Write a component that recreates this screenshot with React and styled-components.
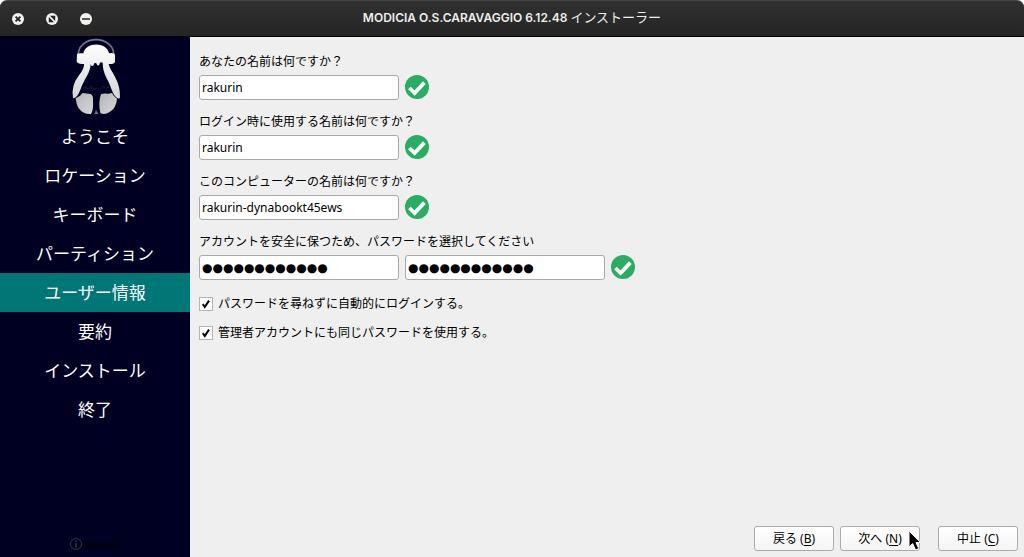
import React from "react";
import styled, { createGlobalStyle } from "styled-components";

const GlobalStyle = createGlobalStyle`
  *, *::before, *::after { box-sizing: border-box; }
  body {
    margin: 0;
    background: #ffffff;
    color: #000000;
    font: 12px/18px "Noto Sans", "Noto Sans CJK JP", sans-serif;
  }
`;

const Window = styled.div`
  display: flex;
  flex-direction: column;
  min-height: 100vh;
`;

const TitleBar = styled.header`
  display: grid;
  grid-template-columns: 1fr auto 1fr;
  align-items: center;
  height: 37px;
  padding: 0 12px;
  background: linear-gradient(#303030, #252525);
  border-top: 1px solid #454545;
  border-bottom: 1px solid #000000;
  border-radius: 7px 7px 0 0;
`;

const WindowControls = styled.div`
  display: flex;
  gap: 22px;
`;

const ControlButton = styled.button`
  display: block;
  width: 12px;
  height: 12px;
  padding: 0;
  border: 0;
  border-radius: 50%;
  background: #f2f1ee;

  svg { display: block; }
`;

const Title = styled.h1`
  margin: 0;
  padding-bottom: 2px;
  color: #eeeeec;
  font: 600 12px/20px Inter, "Noto Sans CJK JP", sans-serif;

  span {
    font-size: 13px;
    font-weight: 400;
  }
`;

const Body = styled.div`
  display: flex;
  flex: 1;
`;

const Sidebar = styled.aside`
  display: flex;
  flex-direction: column;
  flex: 0 0 190px;
  background: #000022;
`;

const Logo = styled.svg`
  display: block;
  align-self: center;
  width: 70px;
  height: 80px;
`;

const Steps = styled.ol`
  flex: 1;
  margin: 0;
  padding: 0;
  list-style: none;
`;

const Step = styled.li`
  color: #ffffff;
  background: ${(p) => (p.$active ? "#007777" : "transparent")};
  font-size: 17px;
  line-height: 39px;
  text-align: center;
`;

const AboutButton = styled.button`
  display: flex;
  align-items: center;
  justify-content: center;
  gap: 4px;
  height: 26px;
  padding: 0;
  border: 0;
  background: none;
  color: #000008;
  font: inherit;
`;

const Main = styled.main`
  display: flex;
  flex-direction: column;
  flex: 1;
  background: #efefef;
`;

const Form = styled.form`
  flex: 1;
  padding: 16px 9px;
`;

const Fields = styled.div`
  display: grid;
  gap: 13px;
  margin-bottom: 9px;
`;

const Field = styled.div`
  display: grid;
  gap: 4px;
`;

const FieldLabel = styled.label`
  display: block;
`;

const FieldRow = styled.div`
  display: flex;
  align-items: flex-start;
  gap: 6px;
`;

const TextInput = styled.input`
  width: 200px;
  height: 25px;
  padding: 0 2px;
  border: 1px solid #a9a9a9;
  border-radius: 3px;
  background: #ffffff;
  color: #000000;
  font: inherit;
  outline: none;
`;

const MaskedInput = styled(TextInput)`
  font-family: "DejaVu Sans", sans-serif;
  font-size: 12px;
`;

const CheckRow = styled.label`
  display: flex;
  align-items: center;
  gap: 5px;
  height: 29px;
`;

const CheckBox = styled.input`
  appearance: none;
  width: 14px;
  height: 14px;
  margin: 0;
  border: 1px solid #b4b4b4;
  background: #ffffff;

  &:checked {
    background-image: url("data:image/svg+xml,%3Csvg xmlns='http://www.w3.org/2000/svg' viewBox='0 0 12 12'%3E%3Cpath d='M2.8 6.2L4.8 9L9 2.6' fill='none' stroke='black' stroke-width='2'/%3E%3C/svg%3E");
  }
`;

const Footer = styled.footer`
  display: flex;
  justify-content: flex-end;
  gap: 6px;
  padding: 6px;
`;

const PushButton = styled.button`
  position: relative;
  width: 80px;
  height: 25px;
  margin-left: ${(p) => (p.$apart ? "12px" : "0")};
  padding: 0;
  border: 1px solid #ababab;
  border-radius: 3px;
  background: linear-gradient(#ffffff, #f5f5f5);
  color: #000000;
  font: inherit;

  u { text-underline-offset: 2px; }
`;

const Pointer = styled.svg`
  position: absolute;
  top: 3px;
  right: -5px;
  width: 16px;
  height: 22px;
`;

const steps = [
  "ようこそ",
  "ロケーション",
  "キーボード",
  "パーティション",
  "ユーザー情報",
  "要約",
  "インストール",
  "終了",
];

const fields = [
  { id: "full-name", label: "あなたの名前は何ですか？", value: "rakurin" },
  { id: "login-name", label: "ログイン時に使用する名前は何ですか？", value: "rakurin" },
  { id: "host-name", label: "このコンピューターの名前は何ですか？", value: "rakurin-dynabookt45ews" },
];

const MASK = "●".repeat(12);

function ValidMark() {
  return (
    <svg width="24" height="24" viewBox="0 0 24 24" role="img" aria-label="OK">
      <circle cx="12" cy="12" r="12" fill="#27ae60" />
      <path d="M4.4 13L9.6 18L19.4 7.6" fill="none" stroke="#ffffff" strokeWidth="3.8" />
    </svg>
  );
}

function Penguin() {
  return (
    <Logo viewBox="0 3 210 240" aria-hidden="true">
      <defs>
        <linearGradient id="fur" x1="0" y1="0" x2="0" y2="1">
          <stop offset="0" stopColor="#ffffff" />
          <stop offset="1" stopColor="#d4d4d4" />
        </linearGradient>
        <linearGradient id="feet" x1="0" y1="0" x2="1" y2="1">
          <stop offset="0" stopColor="#b4b4b4" />
          <stop offset="1" stopColor="#d8d8d8" />
        </linearGradient>
      </defs>
      <path d="M55 54A53 43 0 0 1 161 54" fill="none" stroke="#74748a" strokeWidth="5" />
      <path
        d="M51 55Q54 50 70 52C76 17 141 17 147 52Q163 49 165 56V77Q163 85 146 84C151 108 182 132 180 184Q179 190 172 186C157 178 154 151 141 129Q128 105 128 80Q119 76 118 86Q113 93 109 82Q101 78 101 88Q93 93 92 84C91 112 73 127 62 159Q52 187 39 187Q32 150 57 118Q74 96 72 84Q53 86 50 76Z"
        fill="url(#fur)"
      />
      <path d="M47 187Q60 182 68 171L92 174Q100 178 99 193Q101 222 93 234Q70 236 55 215Q50 208 47 187Z" fill="url(#feet)" />
      <path d="M123 175Q128 171 145 173L156 171Q161 183 171 188Q169 215 149 228Q133 239 121 231Q114 198 123 175Z" fill="url(#feet)" />
      <path d="M108 221L115 234H103Z" fill="#70707c" />
      <path d="M70 158q5-10 10-2t9-1 10 1 6 0M123 158q5-12 11-3m3 3q5-10 11-2" fill="none" stroke="#242438" strokeWidth="3" />
    </Logo>
  );
}

export default function App() {
  return (
    <>
      <GlobalStyle />
      <Window>
        <TitleBar>
          <WindowControls>
            <ControlButton aria-label="閉じる">
              <svg width="12" height="12" viewBox="0 0 12 12">
                <path d="M3.6 3.6L8.4 8.4M8.4 3.6L3.6 8.4" stroke="#222222" strokeWidth="1.8" />
              </svg>
            </ControlButton>
            <ControlButton aria-label="最大化">
              <svg width="12" height="12" viewBox="0 0 12 12">
                <path d="M4 2.8H9.2V8ZM2.8 4V9.2H8Z" fill="#222222" />
              </svg>
            </ControlButton>
            <ControlButton aria-label="最小化">
              <svg width="12" height="12" viewBox="0 0 12 12">
                <path d="M2 6H10" stroke="#333333" strokeWidth="1.6" />
              </svg>
            </ControlButton>
          </WindowControls>
          <Title>
            MODICIA O.S.CARAVAGGIO 6.12.48 <span>インストーラー</span>
          </Title>
        </TitleBar>
        <Body>
          <Sidebar>
            <Penguin />
            <Steps>
              {steps.map((name) => (
                <Step key={name} $active={name === "ユーザー情報"}>
                  {name}
                </Step>
              ))}
            </Steps>
            <AboutButton>
              <svg width="12" height="12" viewBox="0 0 12 12" aria-hidden="true">
                <circle cx="6" cy="6" r="5.5" fill="none" stroke="#34343c" />
                <path d="M6 2.5V4M6 5V9.5" stroke="#34343c" strokeWidth="1.5" />
              </svg>
              About
            </AboutButton>
          </Sidebar>
          <Main>
            <Form>
              <Fields>
                {fields.map((f) => (
                  <Field key={f.id}>
                    <FieldLabel htmlFor={f.id}>{f.label}</FieldLabel>
                    <FieldRow>
                      <TextInput id={f.id} type="text" defaultValue={f.value} spellCheck={false} />
                      <ValidMark />
                    </FieldRow>
                  </Field>
                ))}
                <Field>
                  <FieldLabel htmlFor="password">
                    アカウントを安全に保つため、パスワードを選択してください
                  </FieldLabel>
                  <FieldRow>
                    <MaskedInput id="password" type="text" defaultValue={MASK} autoComplete="off" />
                    <MaskedInput aria-label="パスワードの確認" type="text" defaultValue={MASK} autoComplete="off" />
                    <ValidMark />
                  </FieldRow>
                </Field>
              </Fields>
              <CheckRow>
                <CheckBox type="checkbox" defaultChecked />
                パスワードを尋ねずに自動的にログインする。
              </CheckRow>
              <CheckRow>
                <CheckBox type="checkbox" defaultChecked />
                管理者アカウントにも同じパスワードを使用する。
              </CheckRow>
            </Form>
            <Footer>
              <PushButton>
                戻る (<u>B</u>)
              </PushButton>
              <PushButton>
                次へ (<u>N</u>)
                <Pointer viewBox="0 0 16 22" aria-hidden="true">
                  <path
                    d="M1 1V17L4.7 13.6L7.6 20L10.8 18.6L8 12.5H12.5Z"
                    fill="#000000"
                    stroke="#ffffff"
                    strokeWidth="1"
                  />
                </Pointer>
              </PushButton>
              <PushButton $apart>
                中止 (<u>C</u>)
              </PushButton>
            </Footer>
          </Main>
        </Body>
      </Window>
    </>
  );
}
